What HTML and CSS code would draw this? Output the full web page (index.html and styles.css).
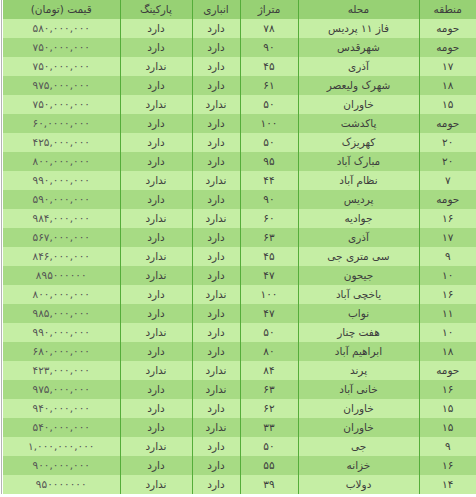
FILE: index.html
```html
<!DOCTYPE html>
<html lang="fa" dir="rtl">
<head>
<meta charset="utf-8">
<link rel="stylesheet" href="styles.css">
</head>
<body>
<div class="wrap">
<table class="prices">
<colgroup>
<col class="c-zone"><col class="c-area"><col class="c-size"><col class="c-store"><col class="c-park"><col class="c-price">
</colgroup>
<thead>
<tr><th>منطقه</th><th>محله</th><th>متراژ</th><th>انباری</th><th>پارکینگ</th><th>قیمت (تومان)</th></tr>
</thead>
<tbody>
<tr><td>حومه</td><td>فاز ۱۱ پردیس</td><td>۷۸</td><td>دارد</td><td>دارد</td><td>۵۸۰,۰۰۰,۰۰۰</td></tr>
<tr><td>حومه</td><td>شهرقدس</td><td>۹۰</td><td>دارد</td><td>دارد</td><td>۷۵۰,۰۰۰,۰۰۰</td></tr>
<tr><td>۱۷</td><td>آذری</td><td>۴۵</td><td>دارد</td><td>ندارد</td><td>۷۵۰,۰۰۰,۰۰۰</td></tr>
<tr><td>۱۸</td><td>شهرک ولیعصر</td><td>۶۱</td><td>دارد</td><td>دارد</td><td>۹۷۵,۰۰۰,۰۰۰</td></tr>
<tr><td>۱۵</td><td>خاوران</td><td>۵۰</td><td>ندارد</td><td>ندارد</td><td>۷۵۰,۰۰۰,۰۰۰</td></tr>
<tr><td>حومه</td><td>پاکدشت</td><td>۱۰۰</td><td>دارد</td><td>دارد</td><td>۶۰,۰۰۰۰,۰۰۰</td></tr>
<tr><td>۲۰</td><td>کهریزک</td><td>۵۰</td><td>دارد</td><td>دارد</td><td>۴۲۵,۰۰۰,۰۰۰</td></tr>
<tr><td>۲۰</td><td>مبارک آباد</td><td>۹۵</td><td>دارد</td><td>دارد</td><td>۸۰۰,۰۰۰,۰۰۰</td></tr>
<tr><td>۷</td><td>نظام آباد</td><td>۴۴</td><td>ندارد</td><td>ندارد</td><td>۹۹۰,۰۰۰,۰۰۰</td></tr>
<tr><td>حومه</td><td>پردیس</td><td>۹۰</td><td>دارد</td><td>دارد</td><td>۵۹۰,۰۰۰,۰۰۰</td></tr>
<tr><td>۱۶</td><td>جوادیه</td><td>۶۰</td><td>ندارد</td><td>ندارد</td><td>۹۸۴,۰۰۰,۰۰۰</td></tr>
<tr><td>۱۷</td><td>آذری</td><td>۶۳</td><td>دارد</td><td>دارد</td><td>۵۶۷,۰۰۰,۰۰۰</td></tr>
<tr><td>۹</td><td>سی متری جی</td><td>۴۵</td><td>دارد</td><td>ندارد</td><td>۸۴۶,۰۰۰,۰۰۰</td></tr>
<tr><td>۱۰</td><td>جیحون</td><td>۴۷</td><td>دارد</td><td>ندارد</td><td>۸۹۵۰۰۰۰۰۰</td></tr>
<tr><td>۱۶</td><td>یاخچی آباد</td><td>۱۰۰</td><td>ندارد</td><td>دارد</td><td>۸۰۰,۰۰۰,۰۰۰</td></tr>
<tr><td>۱۱</td><td>نواب</td><td>۴۷</td><td>دارد</td><td>دارد</td><td>۹۸۵,۰۰۰,۰۰۰</td></tr>
<tr><td>۱۰</td><td>هفت چنار</td><td>۵۰</td><td>دارد</td><td>ندارد</td><td>۹۹۰,۰۰۰,۰۰۰</td></tr>
<tr><td>۱۸</td><td>ابراهیم آباد</td><td>۸۰</td><td>دارد</td><td>دارد</td><td>۶۸۰,۰۰۰,۰۰۰</td></tr>
<tr><td>حومه</td><td>پرند</td><td>۸۴</td><td>ندارد</td><td>ندارد</td><td>۴۲۳,۰۰۰,۰۰۰</td></tr>
<tr><td>۱۶</td><td>خانی آباد</td><td>۶۳</td><td>ندارد</td><td>دارد</td><td>۹۷۵,۰۰۰,۰۰۰</td></tr>
<tr><td>۱۵</td><td>خاوران</td><td>۶۲</td><td>دارد</td><td>دارد</td><td>۹۴۰,۰۰۰,۰۰۰</td></tr>
<tr><td>۱۵</td><td>خاوران</td><td>۳۳</td><td>ندارد</td><td>دارد</td><td>۵۴۰,۰۰۰,۰۰۰</td></tr>
<tr><td>۹</td><td>جی</td><td>۵۰</td><td>دارد</td><td>ندارد</td><td>۱,۰۰۰,۰۰۰,۰۰۰</td></tr>
<tr><td>۱۶</td><td>خزانه</td><td>۵۵</td><td>دارد</td><td>دارد</td><td>۹۰۰,۰۰۰,۰۰۰</td></tr>
<tr><td>۱۴</td><td>دولاب</td><td>۳۹</td><td>دارد</td><td>ندارد</td><td>۹۵۰۰۰۰۰۰۰</td></tr>
</tbody>
</table>
</div>
</body>
</html>
```
FILE: styles.css
```css
html, body {
  margin: 0;
  padding: 0;
  background: #ffffff;
}
.wrap {
  margin-left: 1px;
  border-left: 1px solid #b5b5b5;
  padding-left: 1px;
}
.prices {
  border-collapse: collapse;
  table-layout: fixed;
  width: 473px;
  font-family: "DejaVu Sans", sans-serif;
  font-size: 10.5px;
  color: #3d3d3d;
}
.c-zone { width: 57px; }
.c-area { width: 121px; }
.c-size { width: 58px; }
.c-store { width: 48px; }
.c-park { width: 72px; }
.c-price { width: 117px; }
.prices th,
.prices td {
  height: 19px;
  padding: 0;
  text-align: center;
  font-weight: normal;
  border-left: 1px solid #55ad3a;
  white-space: nowrap;
  line-height: 19px;
}
.prices th:last-child,
.prices td:last-child {
  border-left: none;
}
.prices td:last-child {
  color: #555555;
}
.prices thead tr {
  background: #97d174;
}
.prices tbody tr:nth-child(odd) {
  background: #c5eea4;
}
.prices tbody tr:nth-child(even) {
  background: #a7db84;
}
```
